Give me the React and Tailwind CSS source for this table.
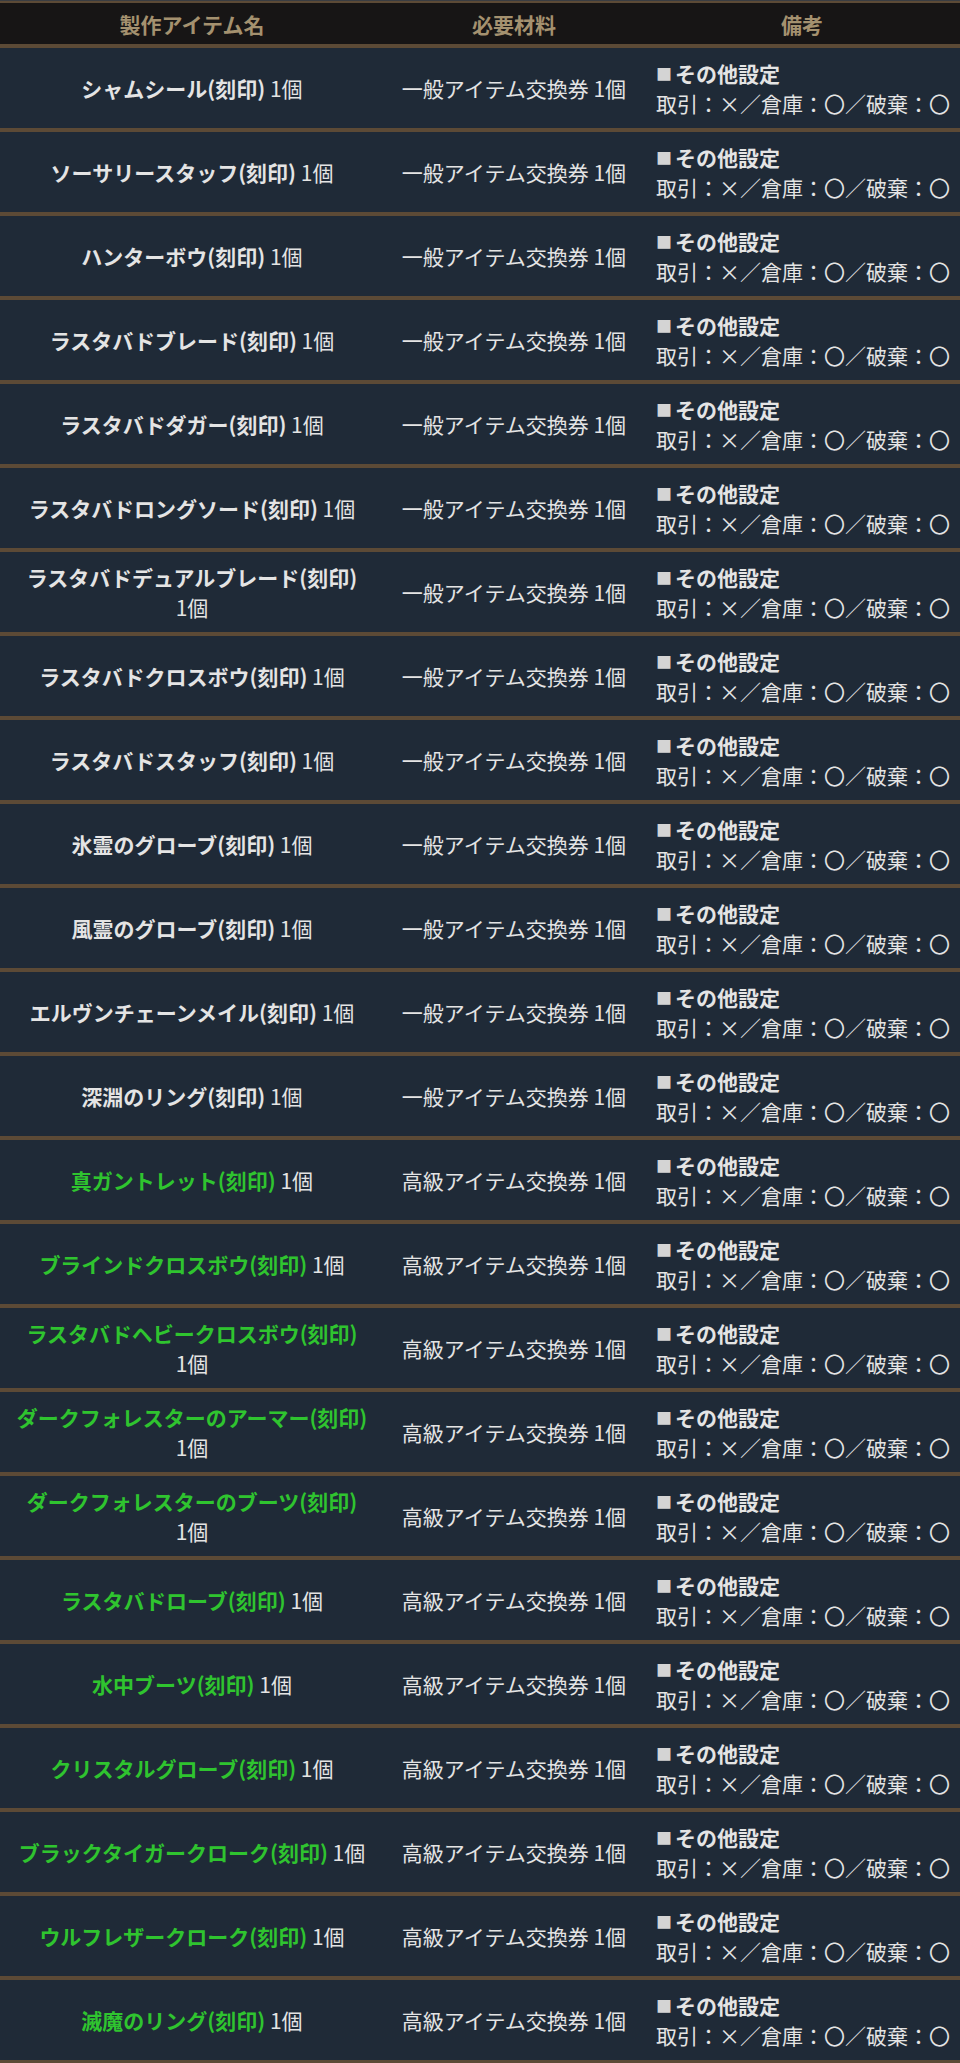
import React from 'react';

const ROWS = [
    { name: 'シャムシール(刻印)', mat: '一般アイテム交換券 1個' },
    { name: 'ソーサリースタッフ(刻印)', mat: '一般アイテム交換券 1個' },
    { name: 'ハンターボウ(刻印)', mat: '一般アイテム交換券 1個' },
    { name: 'ラスタバドブレード(刻印)', mat: '一般アイテム交換券 1個' },
    { name: 'ラスタバドダガー(刻印)', mat: '一般アイテム交換券 1個' },
    { name: 'ラスタバドロングソード(刻印)', mat: '一般アイテム交換券 1個' },
    { name: 'ラスタバドデュアルブレード(刻印)', mat: '一般アイテム交換券 1個', wrap: true },
    { name: 'ラスタバドクロスボウ(刻印)', mat: '一般アイテム交換券 1個' },
    { name: 'ラスタバドスタッフ(刻印)', mat: '一般アイテム交換券 1個' },
    { name: '氷霊のグローブ(刻印)', mat: '一般アイテム交換券 1個' },
    { name: '風霊のグローブ(刻印)', mat: '一般アイテム交換券 1個' },
    { name: 'エルヴンチェーンメイル(刻印)', mat: '一般アイテム交換券 1個' },
    { name: '深淵のリング(刻印)', mat: '一般アイテム交換券 1個' },
    { name: '真ガントレット(刻印)', mat: '高級アイテム交換券 1個', green: true },
    { name: 'ブラインドクロスボウ(刻印)', mat: '高級アイテム交換券 1個', green: true },
    { name: 'ラスタバドヘビークロスボウ(刻印)', mat: '高級アイテム交換券 1個', green: true, wrap: true },
    { name: 'ダークフォレスターのアーマー(刻印)', mat: '高級アイテム交換券 1個', green: true, wrap: true },
    { name: 'ダークフォレスターのブーツ(刻印)', mat: '高級アイテム交換券 1個', green: true, wrap: true },
    { name: 'ラスタバドローブ(刻印)', mat: '高級アイテム交換券 1個', green: true },
    { name: '水中ブーツ(刻印)', mat: '高級アイテム交換券 1個', green: true },
    { name: 'クリスタルグローブ(刻印)', mat: '高級アイテム交換券 1個', green: true },
    { name: 'ブラックタイガークローク(刻印)', mat: '高級アイテム交換券 1個', green: true },
    { name: 'ウルフレザークローク(刻印)', mat: '高級アイテム交換券 1個', green: true },
    { name: '滅魔のリング(刻印)', mat: '高級アイテム交換券 1個', green: true },
];

export default function App() {
    return (
        <div className="w-[960px] bg-[#1f2a37] text-[#e4e4e4] text-[21px] leading-[30px] font-['Noto_Sans_CJK_JP','Noto_Sans',sans-serif]">
            {/* Header */}
            <div className="border-t border-[#3a3d42]">
                <div className="grid grid-cols-[384px_260px_1fr] h-[47px] bg-[#171515] border-t-2 border-b-4 border-[#5c4a36] font-bold text-[#a4916f]">
                    <div className="flex items-center justify-center">製作アイテム名</div>
                    <div className="flex items-center justify-center">必要材料</div>
                    <div className="flex items-center justify-center">備考</div>
                </div>
            </div>

            {ROWS.map((r, i) => (
                <div key={i} className="grid grid-cols-[384px_260px_1fr] h-[84px] border-b-4 border-[#5c4a36]">
                    <div className="flex items-center justify-center text-center px-2">
                        <div className="whitespace-nowrap">
                            <span className={`font-bold ${r.green ? 'text-[#2fc42f]' : 'text-[#e4e4e4]'}`}>{r.name}</span>
                            {r.wrap ? <br /> : ' '}
                            <span>1個</span>
                        </div>
                    </div>
                    <div className="flex items-center justify-center whitespace-nowrap">{r.mat}</div>
                    <div className="flex flex-col justify-center pl-[12px] whitespace-nowrap">
                        <div className="font-bold flex items-center">
                            <span className="text-[16px] text-[#d4d4d4] mr-[3px]">■</span>
                            その他設定
                        </div>
                        <div>取引：×／倉庫：〇／破棄：〇</div>
                    </div>
                </div>
            ))}
        </div>
    );
}
